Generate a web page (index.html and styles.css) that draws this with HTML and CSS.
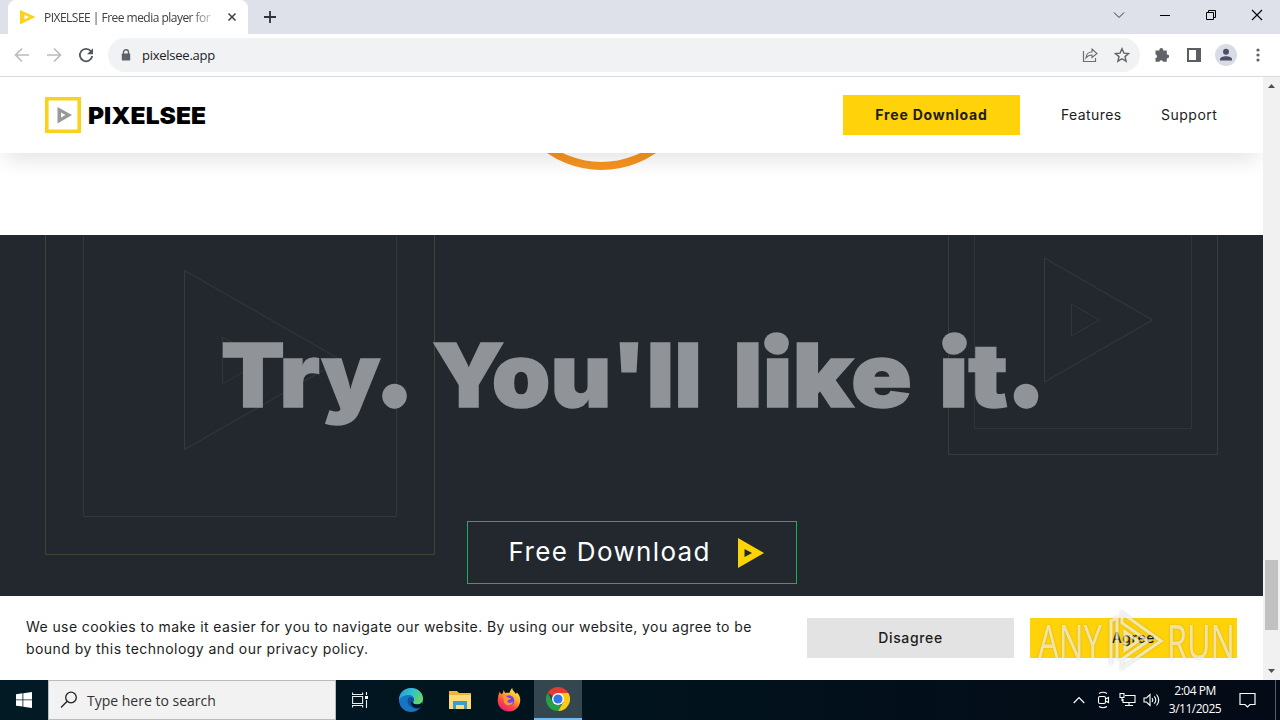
FILE: index.html
```html
<!DOCTYPE html>
<html lang="en">
<head>
<meta charset="utf-8">
<title>PIXELSEE | Free media player for</title>
<link rel="stylesheet" href="styles.css">
</head>
<body>
<div class="tabstrip">
  <div class="tab">
    <svg class="favicon" width="16" height="16" viewBox="0 0 16 16"><path d="M0 1L15.500 8 0 15.500zM4.500 6v4.500L9 8z" fill="#fad41b" fill-rule="evenodd"/></svg>
    <span class="tab-title">PIXELSEE | Free media player for</span>
    <svg class="tab-close" width="10" height="10" viewBox="0 0 10 10"><path d="M1.500 1.500l7 7M8.500 1.500l-7 7" stroke="#3c4043" stroke-width="1.500"/></svg>
  </div>
  <svg class="new-tab" width="12" height="12" viewBox="0 0 12 12"><path d="M6 0v12M0 6h12" stroke="#303338" stroke-width="1.800"/></svg>
  <div class="window-controls">
    <svg width="12" height="12" viewBox="0 0 12 12"><path d="M1 3.500l5 5 5-5" fill="none" stroke="#333" stroke-width="1"/></svg>
    <svg width="12" height="12" viewBox="0 0 12 12"><path d="M1 6.500h10" stroke="#000"/></svg>
    <svg width="12" height="12" viewBox="0 0 12 12"><path d="M1.500 3.500h7v7h-7zM3.500 3.500v-2h7v7h-2" fill="none" stroke="#000" stroke-width="1"/></svg>
    <svg width="12" height="12" viewBox="0 0 12 12"><path d="M1 1l10 10M11 1L1 11" stroke="#000" stroke-width="1.100"/></svg>
  </div>
</div>
<div class="toolbar">
  <div class="nav-buttons">
    <svg width="16" height="16" viewBox="0 0 16 16"><path d="M15 8H2M8 1.500L1.500 8 8 14.500" fill="none" stroke="#babcbe" stroke-width="1.700"/></svg>
    <svg width="16" height="16" viewBox="0 0 16 16"><path d="M1 8h13M8 1.500L14.500 8 8 14.500" fill="none" stroke="#babcbe" stroke-width="1.700"/></svg>
    <svg width="16" height="16" viewBox="0 0 16 16"><path d="M13 4.300A6.200 6.200 0 1 0 14.200 9" fill="none" stroke="#54575b" stroke-width="1.800"/><path d="M15 1.200v6H9z" fill="#54575b"/></svg>
  </div>
  <div class="omnibox">
    <svg width="10" height="12" viewBox="0 0 10 12"><path d="M2.500 5V3.200a2.500 2.500 0 0 1 5 0V5" fill="none" stroke="#5f6368" stroke-width="1.400"/><rect x=".8" y="4.500" width="8.400" height="7" rx=".8" fill="#5f6368"/></svg>
    <span class="url">pixelsee.app</span>
    <svg class="share" width="16" height="16" viewBox="0 0 16 16"><path d="M1.500 4v10.500h12V11" fill="none" stroke="#6c7074" stroke-width="1.200"/><path d="M4 11c.3-4 2.300-6 6-6V2l5 4.500-5 4V8c-3 0-4.500.8-6 3z" fill="none" stroke="#6c7074" stroke-width="1.100"/></svg>
    <svg width="16" height="16" viewBox="0 0 16 16"><path d="M8 1.800l1.900 4.300 4.700.4-3.600 3.100 1.100 4.600L8 11.700l-4.100 2.500L5 9.600 1.400 6.500l4.700-.4z" fill="none" stroke="#5f6368" stroke-width="1.400"/></svg>
  </div>
  <div class="toolbar-actions">
    <svg width="16" height="16" viewBox="0 0 16 16"><path d="M1.500 3.500h4a1.900 1.900 0 1 1 3.600 0h3.700v4a1.900 1.900 0 1 1 0 3.700v3.600H9.200a2 2 0 0 0-3.900 0H1.500v-3.700a2 2 0 0 0 0-3.900z" fill="#5f6368"/></svg>
    <svg width="16" height="16" viewBox="0 0 16 16"><path d="M1 1h14v14H1z" fill="#5a5e63"/><path d="M3 3h7v10H3z" fill="#fff"/></svg>
    <svg class="avatar" width="22" height="22" viewBox="0 0 22 22"><circle cx="11" cy="11" r="11" fill="#dadce5"/><circle cx="11" cy="7.800" r="3" fill="#4a5068"/><path d="M5 16.500v-1.200c0-4 12-4 12 0v1.200z" fill="#4a5068"/></svg>
    <svg class="menu" width="4" height="16" viewBox="0 0 4 16"><g fill="#5f6368"><circle cx="2" cy="3" r="1.600"/><circle cx="2" cy="8" r="1.600"/><circle cx="2" cy="13" r="1.600"/></g></svg>
  </div>
</div>
<div class="viewport">
  <main class="page">
    <header class="site-header">
      <div class="brand">
        <svg width="36" height="36" viewBox="0 0 36 36"><path d="M1.800 1.800h32.400v32.400H1.800z" fill="#fff" stroke="#fbd11c" stroke-width="3.600"/><path d="M12.500 10L27 18l-14.500 8.500zM16 15.500v5l4.500-2.500z" fill="#999" fill-rule="evenodd"/></svg>
        <svg class="wordmark" width="120" height="36" viewBox="0 0 120 36"><text x="0" y="27" textLength="118" lengthAdjust="spacingAndGlyphs">PIXELSEE</text></svg>
      </div>
      <nav class="site-nav">
        <a class="nav-download">Free Download</a>
        <a class="nav-link features">Features</a>
        <a class="nav-link support">Support</a>
      </nav>
    </header>
    <section class="ring-section">
      <svg width="120" height="20" viewBox="0 0 120 20"><circle cx="59.500" cy="-79" r="92" fill="none" stroke="#f7941f" stroke-width="8"/></svg>
    </section>
    <section class="hero">
      <svg class="hero-art" width="1263" height="361" viewBox="0 0 1263 361">
        <g fill="none">
          <path d="M45.500 0v319.500h389V0" stroke="#3d4738"/>
          <path d="M83.500 0v281.500h313V0" stroke="#303839"/>
          <path d="M184.500 35.500v179L341 125z" stroke="#343a40"/>
          <path d="M222.500 102v47l41-24z" stroke="#30363c"/>
          <path d="M948.500 0v219.500h269V0" stroke="#353e38"/>
          <path d="M974.500 0v193.500h217V0" stroke="#2e3638"/>
          <path d="M1044.500 23v124l108-62z" stroke="#343a40"/>
          <path d="M1071.500 69v32l28-16z" stroke="#30363c"/>
        </g>
        <g class="hero-title">
          <text x="221" y="172" textLength="191" lengthAdjust="spacingAndGlyphs">Try.</text>
          <text x="432" y="172" textLength="270" lengthAdjust="spacingAndGlyphs">You'll</text>
          <text x="733" y="172" textLength="179" lengthAdjust="spacingAndGlyphs">like</text>
          <text x="939" y="172" textLength="106" lengthAdjust="spacingAndGlyphs">it.</text>
          <g class="title-dots"><circle cx="394.500" cy="161" r="12.300"/><circle cx="1026" cy="161" r="12.300"/><ellipse cx="776.500" cy="108" rx="12.300" ry="10.800"/><ellipse cx="954.500" cy="108" rx="12.300" ry="10.800"/></g>
        </g>
      </svg>
      <a class="hero-button"><span>Free Download</span><svg width="27" height="30" viewBox="0 0 27 30"><path d="M0 0l26 15L0 30zM6.500 11v8l7.500-4z" fill="#fcd307" fill-rule="evenodd"/></svg></a>
    </section>
    <section class="cookie-bar">
      <p class="cookie-text"><span class="l1">We use cookies to make it easier for you to navigate our website. By using our website, you agree to be</span><br><span class="l2">bound by this technology and our privacy policy.</span></p>
      <a class="cookie-button disagree">Disagree</a>
      <a class="cookie-button agree">Agree</a>
    </section>
    <svg class="watermark" width="204" height="70" viewBox="0 0 204 70">
      <g class="mark-text">
        <text x="5" y="53" textLength="64" lengthAdjust="spacingAndGlyphs">ANY</text>
        <text x="134" y="53" textLength="68" lengthAdjust="spacingAndGlyphs">RUN</text>
      </g>
      <g class="mark-icon"><path d="M78 59V15l6-3v42"/><path d="M89 7l39 28-39 27v-9l26-18-26-18z"/><path d="M92 26l13 9-13 9z"/></g>
    </svg>
  </main>
  <div class="scrollbar">
    <svg width="7" height="4" viewBox="0 0 7 4"><path d="M0 4L3.500 0 7 4z" fill="#505050"/></svg>
    <div class="thumb"></div>
    <svg width="7" height="4" viewBox="0 0 7 4"><path d="M0 0l3.500 4L7 0z" fill="#505050"/></svg>
  </div>
</div>
<footer class="taskbar">
  <div class="start"><svg width="16" height="16" viewBox="0 0 16 16"><path d="M0 2.200l6.500-.9v6.200H0zM7.300 1.200L16 0v7.500H7.300zM0 8.300h6.500v6.300L0 13.700zM7.300 8.300H16V16l-8.700-1.200z" fill="#fff"/></svg></div>
  <div class="search"><svg width="18" height="18" viewBox="0 0 18 18"><g fill="none" stroke="#222" stroke-width="1.300"><circle cx="11" cy="6.500" r="5.300"/><path d="M7.200 10.300L1 16.500"/></g></svg><span>Type here to search</span></div>
  <div class="app"><svg width="18" height="18" viewBox="0 0 18 18"><g fill="none" stroke="#e8edef" stroke-width="1.100"><path d="M1.600 1.500v2h10v-2M1.600 16.500v-2h10v2M1.600 5.500h10v7h-10zM15.500 1v3M15.500 9v8"/></g><path d="M14 5h3v3h-3z" fill="#fff"/></svg></div>
  <div class="app edge"><svg width="24" height="24" viewBox="0 0 24 24">
    <defs><linearGradient id="edge-top" x1="0" x2="1" y1=".2" y2=".6"><stop stop-color="#249bd9"/><stop offset=".5" stop-color="#35c1cb"/><stop offset="1" stop-color="#69d75c"/></linearGradient></defs>
    <circle cx="12" cy="12" r="12" fill="#1776c4"/>
    <path d="M0 12C0 5 5 0 12 0s12 5 12 10.500c0 4-3 6-6 6-2.500 0-4-1-4-2 0-.8 1-1.200 1-3 0-2.500-2-4.500-5-4.500C6 7 1 9 0 12z" fill="url(#edge-top)"/>
    <path d="M8.500 13.500c0-3 1.500-5 4-4.500 2 .4 2.500 1.700 2.500 2.500 0 1.800-1 2.200-1 3 0 1 1.500 2 4 2 1.800 0 3.500-.5 4.700-1.800L21 20c-2 .8-4.500 1-7 0-3.300-1.300-5.500-3.600-5.500-6.500z" fill="#0d4f9b"/>
    <path d="M14 14.500c0 1 1.500 2 4 2 2 0 4-.7 5.200-2.500V18l-2.200 1.500c-2 1-4.500.8-6-.2-2-1.300-3.500-3.300-3-5.800z" fill="#01151f"/></svg></div>
  <div class="app folder"><svg width="22" height="20" viewBox="0 0 22 20"><path d="M0 1h8l2 2h12v16H0z" fill="#f2b632"/><path d="M0 5h22v14H0z" fill="#fddb75"/><path d="M4 19v-8h14v8h-3v-4H7v4z" fill="#3c9bd5"/></svg></div>
  <div class="app firefox"><svg width="24" height="24" viewBox="0 0 24 24">
    <defs><linearGradient id="fox" x1=".8" x2=".2" y1="0" y2="1"><stop stop-color="#fff044"/><stop offset=".35" stop-color="#ffb02e"/><stop offset=".65" stop-color="#ff4b3d"/><stop offset="1" stop-color="#e31587"/></linearGradient></defs>
    <path d="M3 3.500c0 1 .4 2 1.300 2.700L6 5l.6-3 1.600 3c1.500-.4 3-.3 4 0 1-1.700 1.700-4 3-5 0 2.500 2.500 3.500 3.500 6l1.300-1.500C22.500 7 23.500 10 23.200 13 22.800 19 18 23.500 12 23.500S.7 19 .7 13C.7 9 1.500 5.500 3 3.500z" fill="url(#fox)"/>
    <circle cx="12" cy="12.500" r="5.300" fill="#7543e5"/><path d="M6 8.500c2-.8 4-.3 5 1.200l3 .5c-1 2-3.500 1.500-3.500 3 0 1.800 3 2.500 5.500.6C15.500 18 9 19 7 14.500z" fill="#ff9636"/></svg></div>
  <div class="app chrome active"><svg width="24" height="24" viewBox="0 0 24 24"><path d="M12 12L1.600 6A12 12 0 0 1 22.400 6z" fill="#e33b2e"/><path d="M22.400 6H12l5.200 9L12 24A12 12 0 0 0 22.400 6z" fill="#fbc916"/><path d="M1.600 6l5.200 9 5.200 3h3.500L12 24A12 12 0 0 1 1.600 6z" fill="#26a047"/><circle cx="12" cy="12" r="6" fill="#fff"/><circle cx="12" cy="12" r="4.600" fill="#3477e2"/></svg></div>
  <div class="tray">
    <svg width="12" height="8" viewBox="0 0 12 8"><path d="M.7 7L6 1.500 11.300 7" fill="none" stroke="#fff" stroke-width="1.200"/></svg>
    <svg class="camera" width="13" height="18" viewBox="0 0 13 18"><g fill="none" stroke="#fff" stroke-width="1.100"><rect x="1.500" y="5.500" width="7" height="7" rx="1.500"/><path d="M8.500 8l3-1.500v5l-3-1.500M2 2.500q4-2.500 8 0M2 15.500q4 2.500 8 0"/></g></svg>
    <svg class="network" width="17" height="16" viewBox="0 0 17 16"><g fill="none" stroke="#fff" stroke-width="1.100"><path d="M6 3.500h10v7H4V7M10 10.500v3M6 13.500h8M1 1.500h4v4H1zM3 5.500v3h1"/></g></svg>
    <svg class="volume" width="17" height="16" viewBox="0 0 17 16"><g fill="none" stroke="#fff" stroke-width="1.100"><path d="M1 6h2.500L7 2.500v11L3.500 10H1zM9 6q1.500 2 0 4M11.300 4.300q3 3.700 0 7.400M13.500 2.500q4.500 5.500 0 11"/></g></svg>
    <div class="clock"><span>2:04 PM</span><span>3/11/2025</span></div>
    <svg class="notice" width="17" height="17" viewBox="0 0 17 17"><path d="M1 1.500h15v11h-5L8.500 15 6 12.500H1z" fill="none" stroke="#fff" stroke-width="1.200"/></svg>
  </div>
</footer>
</body>
</html>
```
FILE: styles.css
```css
* { box-sizing: border-box; }
body { margin: 0; width: 1280px; height: 720px; overflow: hidden; display: flex; flex-direction: column; background: #fff; font-family: Inter, sans-serif; color: #1c1c1c; }
svg { display: block; flex: none; }
span, a { white-space: nowrap; }

.tabstrip { height: 34px; flex: none; background: #dee1e9; display: flex; align-items: center; padding-left: 8px; }
.tab { width: 240px; height: 34px; background: #fff; border-radius: 8px 8px 0 0; display: flex; align-items: center; padding-left: 12px; }
.tab-title { margin-left: 8px; width: 170px; font: 12px "Open Sans", sans-serif; letter-spacing: -.52px; color: #3c4043; -webkit-mask-image: linear-gradient(90deg, #000 145px, transparent 176px); mask-image: linear-gradient(90deg, #000 145px, transparent 176px); }
.tab-close { margin-left: 13px; }
.new-tab { margin-left: 16px; }
.window-controls { margin-left: auto; display: flex; gap: 34px; padding: 0 17px 5px 0; }

.toolbar { height: 43px; flex: none; border-bottom: 1px solid #d8dadd; display: flex; align-items: center; padding-left: 14px; }
.nav-buttons { display: flex; gap: 16px; width: 94px; }
.omnibox { width: 1032px; height: 34px; border-radius: 17px; background: #f0f2f4; display: flex; align-items: center; padding: 0 10px 0 13px; }
.url { margin-left: 11px; font: 13px "Open Sans", sans-serif; letter-spacing: -.25px; color: #202124; }
.share { margin: 0 16px 0 auto; }
.toolbar-actions { display: flex; align-items: center; margin-left: 14px; gap: 16px; }
.avatar { margin-left: -3px; }
.menu { margin-left: 3px; }

.viewport { height: 603px; flex: none; display: flex; }
.page { width: 1263px; position: relative; overflow: hidden; }
.site-header { height: 76px; background: #fff; position: relative; z-index: 1; display: flex; align-items: center; justify-content: space-between; padding: 0 45px; box-shadow: 0 12px 22px -5px rgba(0, 0, 0, .11); }
.brand { display: flex; align-items: center; gap: 7px; }
.wordmark { font-size: 23.500px; font-weight: 900; fill: #000; }
.site-nav { display: flex; align-items: center; font-size: 14px; }
.nav-download { width: 177px; height: 40px; background: #ffd209; line-height: 40px; text-align: center; font-weight: 700; letter-spacing: .8px; margin-right: 41px; }
.features { width: 100px; letter-spacing: .4px; line-height: 16px; padding-bottom: 1px; }
.support { width: 57px; letter-spacing: .5px; line-height: 16px; padding-bottom: 1px; }
.ring-section { height: 82px; padding-left: 541.500px; }

.hero { height: 361px; background: #23282f; position: relative; display: flex; justify-content: center; align-items: flex-end; padding-bottom: 12px; }
.hero-art { position: absolute; left: 0; top: 0; }
.hero-title { font-size: 88px; font-weight: 900; fill: #909498; stroke: #909498; stroke-width: 1.500px; }
.title-dots { stroke: none; }
.hero-button { position: relative; width: 330px; height: 63px; border: 1px solid #17b257; display: flex; align-items: center; padding-left: 41px; color: #fff; font-size: 26px; }
.hero-button span { width: 229px; letter-spacing: 1.350px; padding-bottom: 2px; }

.cookie-bar { height: 84px; background: #fff; display: flex; align-items: center; padding-left: 26px; }
.cookie-text { margin: 0; width: 781px; font-size: 14px; line-height: 22px; }
.l1 { letter-spacing: .415px; }
.l2 { letter-spacing: .440px; }
.cookie-button { width: 207px; height: 40px; line-height: 40px; text-align: center; font-size: 14px; font-weight: 500; letter-spacing: .65px; }
.disagree { background: #e3e3e3; margin-right: 16px; }
.agree { background: #ffd209; }
.watermark { position: absolute; left: 1033px; top: 529px; filter: drop-shadow(0 0 1px rgba(90, 90, 110, .45)); }
.mark-text { font: 48px "Open Sans", sans-serif; fill: rgba(255, 255, 255, .6); }
.mark-icon { fill: none; stroke: rgba(255, 255, 255, .65); stroke-width: 3px; }

.scrollbar { width: 17px; background: #f1f1f1; display: flex; flex-direction: column; align-items: center; padding: 7px 2px; }
.thumb { width: 13px; height: 70px; background: #c1c1c1; margin: 472px 0 auto; }

.taskbar { height: 40px; flex: none; background: linear-gradient(90deg, #021a24, #01131d 50%, #040a16); display: flex; }
.start, .app { width: 48px; display: flex; align-items: center; justify-content: center; }
.search { width: 288px; height: 40px; background: #f2f2f2; border: 1px solid #b9bcbe; display: flex; align-items: center; padding-left: 11px; gap: 9px; font: 14px "Open Sans", sans-serif; color: #333; }
.edge { margin-left: 3px; }
.folder { margin-left: 1px; }
.firefox { margin-left: 1px; }
.chrome { margin-left: 1px; }
.active { background: #34464e; border-bottom: 2px solid #76b9ed; }
.tray { margin-left: auto; display: flex; align-items: center; padding-right: 4px; border-right: 1px solid #56616a; margin-right: 4px; color: #fff; }
.camera { margin-left: 12px; }
.network { margin-left: 9px; }
.volume { margin-left: 7px; }
.clock { width: 70px; display: flex; flex-direction: column; align-items: center; font: 12px/18px "Open Sans", sans-serif; letter-spacing: -.5px; }
.notice { margin: 0 15px 0 9px; }
```
